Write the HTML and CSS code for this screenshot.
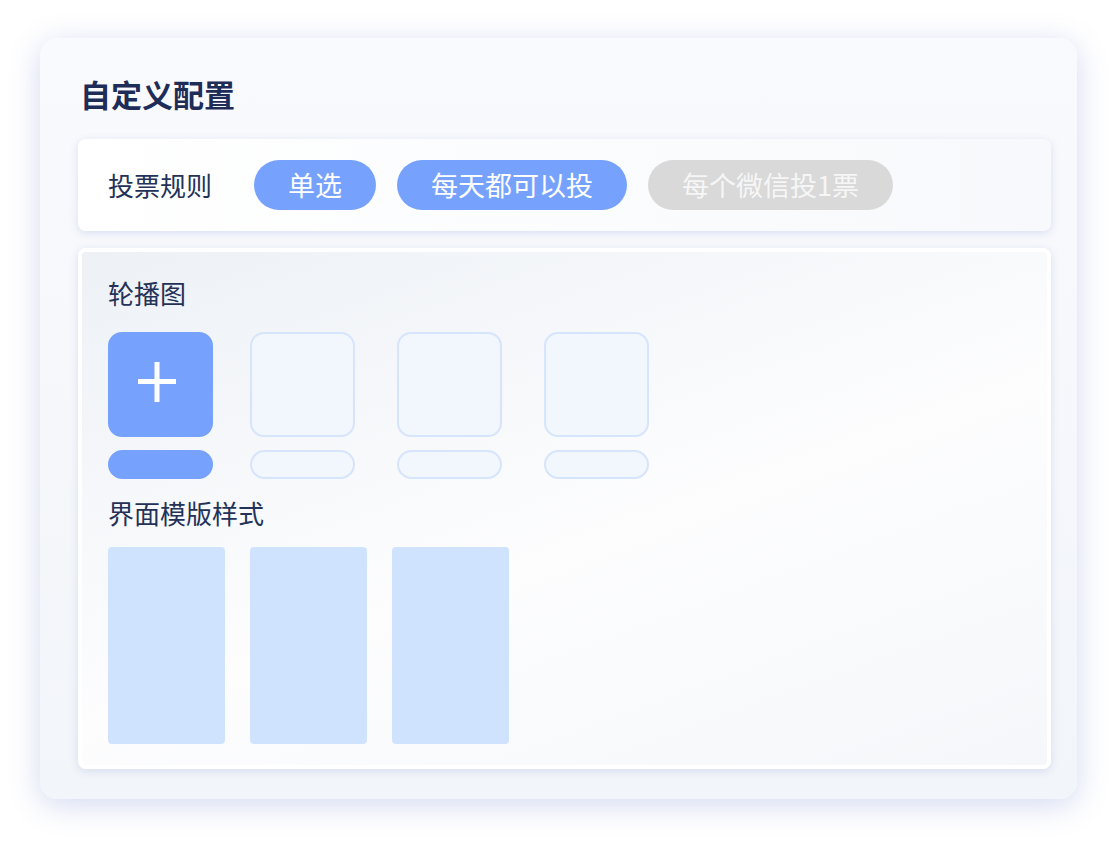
FILE: index.html
```html
<!DOCTYPE html>
<html lang="zh-CN">
<head>
  <meta charset="UTF-8" />
  <meta name="viewport" content="width=device-width, initial-scale=1.0"/>
  <title>自定义配置</title>
  <link rel="stylesheet" href="styles.css">
</head>
<body>
  <div class="panel">
    <h1>自定义配置</h1>

    <div class="card rules">
      <span class="label">投票规则</span>
      <span class="pill active">单选</span>
      <span class="pill active">每天都可以投</span>
      <span class="pill off">每个微信投1票</span>
    </div>

    <div class="card content">
      <div class="label">轮播图</div>
      <div class="slides">
        <div class="slide first">
          <div class="thumb add">
            <svg width="40" height="40" viewBox="0 0 40 40">
              <rect x="17.5" y="0" width="5" height="40" fill="#fff"/>
              <rect x="1" y="17" width="38" height="5" fill="#fff"/>
            </svg>
          </div>
          <div class="caption add"></div>
        </div>
        <div class="slide">
          <div class="thumb"></div>
          <div class="caption"></div>
        </div>
        <div class="slide">
          <div class="thumb"></div>
          <div class="caption"></div>
        </div>
        <div class="slide">
          <div class="thumb"></div>
          <div class="caption"></div>
        </div>
      </div>

      <div class="label">界面模版样式</div>
      <div class="templates">
        <div class="template"></div>
        <div class="template"></div>
        <div class="template"></div>
      </div>
    </div>
  </div>
</body>
</html>
```

FILE: styles.css
```css
body {
  font-family: "Noto Sans CJK SC", "Noto Sans", sans-serif;
  background: #ffffff;
  margin: 0;
  padding: 38px 41px 43px 40px;
}

.panel {
  background: linear-gradient(180deg, #f9fafd, #f2f5f9);
  border-radius: 18px;
  padding: 34px 26px 30px 38px;
  box-shadow: 0 6px 30px rgba(90, 110, 200, 0.26);
}

h1 {
  margin: 0 0 23px 2px;
  font-size: 31px;
  line-height: 44px;
  font-weight: bold;
  color: #1e2d57;
}

.card {
  background: #ffffff;
  border-radius: 8px;
  box-shadow: 0 2px 8px rgba(110, 130, 200, 0.22);
}

.label {
  font-size: 26px;
  line-height: 32px;
  color: #243258;
}

.rules {
  display: flex;
  align-items: center;
  height: 92px;
  padding: 0 30px;
  background: linear-gradient(90deg, #ffffff, #f7f9fc);
}

.rules .label {
  margin-right: 42px;
}

.pill {
  height: 50px;
  line-height: 50px;
  padding: 0 34px;
  margin-right: 21px;
  border-radius: 25px;
  font-size: 27px;
  color: #ffffff;
}

.pill.active {
  background: #76a2fe;
}

.pill.off {
  background: #d9d9d9;
  color: #f6f6f6;
}

.content {
  margin-top: 17px;
  padding: 25px 26px 21px;
  border: 4px solid #ffffff;
  background: linear-gradient(160deg, #edf1f6, #fdfdfe 55%, #f5f7fa);
}

.slides {
  display: flex;
  gap: 42px;
  margin: 23px 0 18px;
}

.slide.first {
  margin-right: -5px;
}

.thumb {
  box-sizing: border-box;
  width: 105px;
  height: 105px;
  border: 2px solid #d6e4fc;
  border-radius: 14px;
  background: #f2f6fd;
}

.thumb.add {
  display: flex;
  align-items: center;
  justify-content: center;
  background: #76a2fe;
  border-color: #76a2fe;
}

.thumb.add svg {
  margin: 0 8px 5px 0;
}

.caption {
  box-sizing: border-box;
  width: 105px;
  height: 29px;
  margin-top: 13px;
  border: 2px solid #d6e4fc;
  border-radius: 15px;
  background: #f2f6fd;
}

.caption.add {
  background: #76a2fe;
  border-color: #76a2fe;
}

.templates {
  display: flex;
  gap: 25px;
  margin-top: 18px;
}

.template {
  width: 117px;
  height: 197px;
  border-radius: 4px;
  background: #d0e3fe;
}
```
